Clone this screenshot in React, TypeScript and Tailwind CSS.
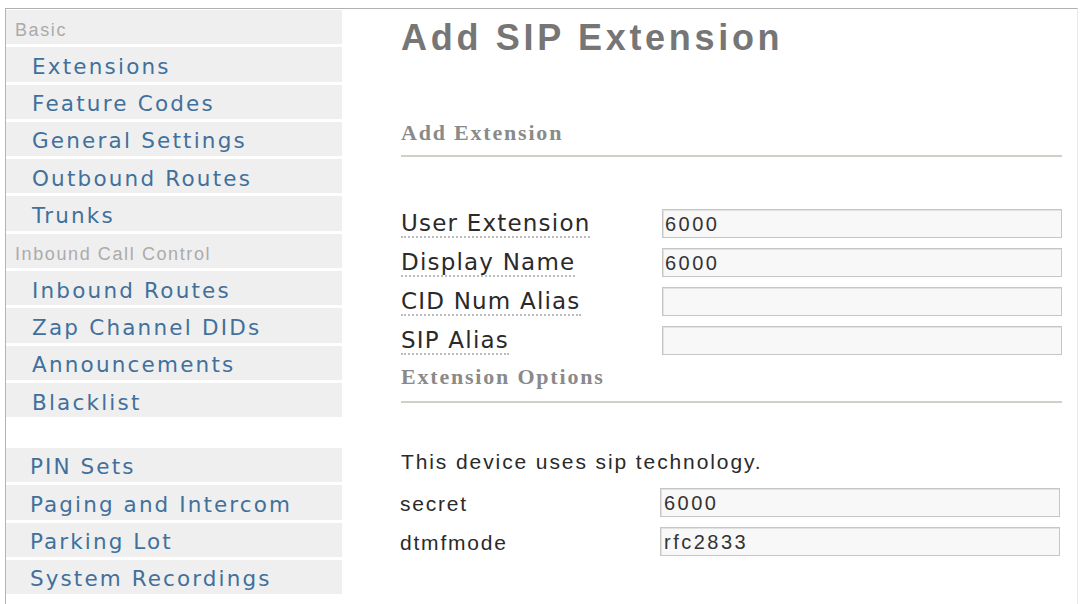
import React from "react";

const topItems = ["Extensions", "Feature Codes", "General Settings", "Outbound Routes", "Trunks"];
const inboundItems = ["Inbound Routes", "Zap Channel DIDs", "Announcements", "Blacklist"];
const otherItems = ["PIN Sets", "Paging and Intercom", "Parking Lot", "System Recordings"];

function Header({ children }: { children: React.ReactNode }) {
  return (
    <div className="flex h-[34.3px] items-center bg-[#efefef] pl-[9px] pt-[7px] font-['Liberation_Sans',Arial,sans-serif] text-[18px] tracking-[1.6px] text-[#ababab]">
      {children}
    </div>
  );
}

function Item({ label, low }: { label: string; low?: boolean }) {
  return (
    <div
      className={
        low
          ? "flex h-[34.3px] items-center bg-[#efefef] pl-[24px] pt-[5px] font-['DejaVu_Sans',Verdana,sans-serif] text-[21.5px] tracking-[2.1px] text-[#41709c]"
          : "flex h-[34.3px] items-center bg-[#efefef] pl-[26px] pt-[5px] font-['DejaVu_Sans',Verdana,sans-serif] text-[21.5px] tracking-[2.2px] text-[#41709c]"
      }
    >
      {label}
    </div>
  );
}

function FieldRow({ label, value }: { label: string; value: string }) {
  return (
    <div className="flex h-[29px]">
      <div className="h-[29px] w-[261px] pt-[1px]">
        <span className="inline-block border-b-2 border-dotted border-[#bcbcbc] font-['DejaVu_Sans',Verdana,sans-serif] text-[23px] leading-[26px] tracking-[1.2px] text-[#2a2a2a]">
          {label}
        </span>
      </div>
      <input
        readOnly
        value={value}
        className="h-[29px] w-[400px] border border-[#c6c6c6] bg-[#f8f8f8] pl-[2px] pt-[1px] font-['Liberation_Sans',Arial,sans-serif] text-[20px] tracking-[2.5px] text-[#333333] shadow-[inset_1px_1px_0_#e2e2e2] outline-none"
      />
    </div>
  );
}

function OptRow({ label, value }: { label: string; value: string }) {
  return (
    <div className="-ml-[1px] flex h-[29px]">
      <div className="h-[29px] w-[260px] pt-[2px] font-['Liberation_Sans',Arial,sans-serif] text-[21px] leading-[28px] tracking-[1.8px] text-[#2a2a2a]">
        {label}
      </div>
      <input
        readOnly
        value={value}
        className="h-[29px] w-[400px] border border-[#c6c6c6] bg-[#f8f8f8] pl-[3px] pt-[1px] font-['Liberation_Sans',Arial,sans-serif] text-[20px] tracking-[2.5px] text-[#333333] shadow-[inset_1px_1px_0_#e2e2e2] outline-none"
      />
    </div>
  );
}

export default function App() {
  return (
    <div className="h-[604px] w-[1081px] overflow-hidden bg-white pt-[8px]">
      <div className="ml-[5px] mr-[3px] flex h-[596px] border-l border-r border-t border-l-[#b4b4b4] border-r-[#e8e8e8] border-t-[#b0b0b0]">
        <nav className="flex w-[336px] flex-col gap-[3px] pt-[1px]">
          <Header>Basic</Header>
          {topItems.map((t) => (
            <Item key={t} label={t} />
          ))}
          <Header>Inbound Call Control</Header>
          {inboundItems.map((t) => (
            <Item key={t} label={t} />
          ))}
          <div className="h-[24.7px]" />
          {otherItems.map((t) => (
            <Item key={t} label={t} low />
          ))}
        </nav>

        <main className="ml-[59px] flex w-[661px] flex-col pt-[9px]">
          <h1 className="h-[40px] font-['Liberation_Sans',Arial,sans-serif] text-[36px] font-bold leading-[40px] tracking-[3.7px] text-[#767676]">
            Add SIP Extension
          </h1>
          <h2 className="mt-[63px] h-[24px] font-['Liberation_Serif','Times_New_Roman',serif] text-[22px] font-bold leading-[24px] tracking-[1.8px] text-[#8a8a8a]">
            Add Extension
          </h2>
          <div className="mt-[10px] h-[2px] bg-[#cfd1c2]" />

          <div className="mt-[52px] flex flex-col gap-[10px]">
            <FieldRow label="User Extension" value="6000" />
            <FieldRow label="Display Name" value="6000" />
            <FieldRow label="CID Num Alias" value="" />
            <FieldRow label="SIP Alias" value="" />
          </div>

          <h2 className="mt-[10px] h-[24px] font-['Liberation_Serif','Times_New_Roman',serif] text-[22px] font-bold leading-[24px] tracking-[1.8px] text-[#8a8a8a]">
            Extension Options
          </h2>
          <div className="mt-[12px] h-[2px] bg-[#cfd1c2]" />

          <p className="mt-[47px] h-[24px] font-['Liberation_Sans',Arial,sans-serif] text-[21px] leading-[24px] tracking-[1.9px] text-[#2a2a2a]">
            This device uses sip technology.
          </p>

          <div className="mt-[14px] flex flex-col gap-[10px]">
            <OptRow label="secret" value="6000" />
            <OptRow label="dtmfmode" value="rfc2833" />
          </div>
        </main>
      </div>
    </div>
  );
}
